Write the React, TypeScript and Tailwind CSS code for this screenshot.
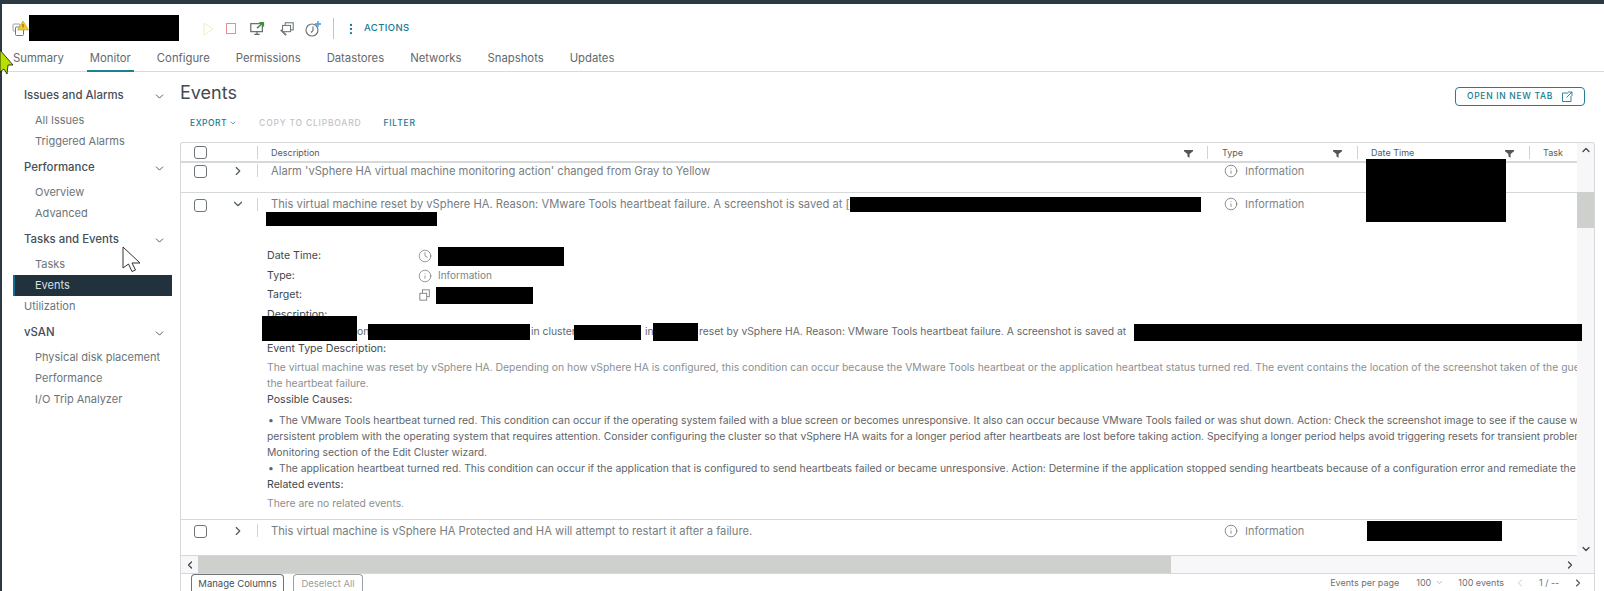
import React from "react";
import { ChevronDown, ChevronRight, ChevronLeft, ChevronUp, MoreVertical, Info, Clock } from "lucide-react";

const Bar = ({ className }: { className: string }) => <span className={`block shrink-0 bg-black ${className}`} />;

const tabs = ["Summary", "Monitor", "Configure", "Permissions", "Datastores", "Networks", "Snapshots", "Updates"];

function Funnel({ className }: { className: string }) {
  return (
    <svg viewBox="0 0 10 10" className={className}>
      <path d="M0 1h10v1.4L6.2 5.6V9.6L3.8 8.4V5.6L0 2.4z" fill="#565656" />
    </svg>
  );
}

function Check() {
  return <span className="block w-[13px] h-[13px] rounded-[3px] border border-[#6f7479] bg-white" />;
}

function NavHead({ label }: { label: string }) {
  return (
    <div className="flex items-center justify-between h-[30px] pt-[2px] pl-[22px] pr-[6px]">
      <span className="text-[11.4px] font-medium text-[#454f57]">{label}</span>
      <ChevronDown size={13} className="text-[#4d5a63]" strokeWidth={1.8} />
    </div>
  );
}

function NavItem({ label, active = false }: { label: string; active?: boolean }) {
  return (
    <div className={`flex items-center h-[21px] ml-[11px] text-[11px] ${active ? "bg-[#22323c] text-[#d6e0e6] border-l-[2px] border-[#0f6d90] pl-[20px]" : "pl-[22px] text-[#6b7479]"}`}>
      {label}
    </div>
  );
}

function InfoCell() {
  return (
    <div className="flex items-center gap-[7px] pl-[17px] text-[11px] text-[#7f8589]">
      <Info size={14} strokeWidth={1.1} className="text-[#555]" />
      <span>Information</span>
    </div>
  );
}

function Sep() {
  return <span className="block w-px h-[13px] bg-[#cfd4d6]" />;
}

function Row({ h, pt, children }: { h: string; pt: string; children: React.ReactNode }) {
  return (
    <div className={`flex items-start ${h} ${pt} border-b border-[#d5d9da]`}>
      <div className="w-[40px] pl-[13px] pt-[2px] shrink-0"><Check /></div>
      <div className="w-[36px] pt-[1px] shrink-0 pl-[10px] text-[#4f5a61]"><ChevronRight size={14} strokeWidth={2} /></div>
      <div className="pt-[1px] shrink-0"><Sep /></div>
      <div className="pl-[13px] w-[949px] shrink-0 text-[11.2px] leading-[16px] text-[#777d81] whitespace-nowrap">{children}</div>
      <InfoCell />
    </div>
  );
}

const Label = ({ children }: { children: React.ReactNode }) => <div className="text-[10.6px] text-[#3f474c] h-[18px] leading-[18px]">{children}</div>;
const Body = ({ children, light = false }: { children: React.ReactNode; light?: boolean }) => <div className={`text-[10.35px] leading-[16px] whitespace-nowrap ${light ? "text-[#8b9093]" : "text-[#5f6569]"}`}>{children}</div>;
const Bullet = () => <span className="inline-block w-[12px] pl-[1px]">•</span>;
const DetailLabel = ({ children }: { children: React.ReactNode }) => <span className="w-[151px] text-[10.6px] text-[#3f474c]">{children}</span>;

export default function App() {
  return (
    <div className="w-[1604px] h-[591px] relative overflow-hidden bg-white text-[#565c60]" style={{ fontFamily: 'Inter, "Liberation Sans", sans-serif' }}>
      <div className="h-[4px] bg-[#2b3a42]" />
      <div className="flex h-[587px] border-l-[2px] border-[#2b3a42]">
        <div className="flex-1 min-w-0 flex flex-col">
          {/* Header */}
          <div className="h-[45px] flex items-center pl-[10px] pt-[4px] shrink-0">
            <svg viewBox="0 0 17 17" className="w-[17px] h-[17px]">
              <rect x="1" y="4" width="7" height="7" rx="1" fill="none" stroke="#9aa0a3" strokeWidth="1" />
              <rect x="3.5" y="7" width="8" height="8.5" rx="1" fill="#fff" stroke="#777" strokeWidth="1" />
              <path d="M11 1 16.5 10H5.5z" fill="#f5cb2a" stroke="#a58d12" strokeWidth=".5" />
              <path d="M11 4v3.5" stroke="#6c5c08" strokeWidth="1" />
            </svg>
            <Bar className="w-[150px] h-[26px] mr-[21px] -mt-[1px]" />
            <div className="flex items-center gap-[7px]">
              <svg viewBox="0 0 16 16" className="w-[16px] h-[16px]"><path d="M4 2v12l9-6z" fill="none" stroke="#f2ecc4" strokeWidth="1" /></svg>
              <span className="w-[10px] h-[11px] mx-[3px] border border-[#ea8d8d]" />
              <svg viewBox="0 0 18 18" className="w-[16px] h-[16px] ml-[3px]"><rect x="2" y="3" width="13" height="9" fill="none" stroke="#59666d" strokeWidth="1.3" /><path d="M6 15h6M9 12v3" stroke="#59666d" strokeWidth="1.3" /><path d="M9 8l7-6" stroke="#3d9140" strokeWidth="1.6" /><path d="M11 1h6v6z" fill="#3d9140" /></svg>
              <svg viewBox="0 0 18 18" className="w-[16px] h-[16px] ml-[7px]"><rect x="7" y="2" width="9" height="8" fill="none" stroke="#70797e" strokeWidth="1.2" /><rect x="4" y="5" width="9" height="7" fill="#fff" stroke="#70797e" strokeWidth="1.2" /><path d="M2 10l6 6" stroke="#70797e" strokeWidth="2" /></svg>
              <svg viewBox="0 0 18 18" className="w-[18px] h-[18px] ml-[2px]"><circle cx="8" cy="10" r="6" fill="none" stroke="#70797e" strokeWidth="1.2" /><path d="M9 6.5v4l-2 2" fill="none" stroke="#70797e" strokeWidth="1.2" /><path d="M14 1v6M11 4h6" stroke="#3f9bd6" strokeWidth="1.3" /></svg>
            </div>
            <span className="w-px h-[21px] bg-[#bfc4c6] ml-[11px] mr-[10px]" />
            <MoreVertical size={14} className="text-[#1a7f93]" strokeWidth={2} />
            <span className="ml-[6px] text-[9.5px] font-medium tracking-[0.4px] text-[#177a8f]">ACTIONS</span>
          </div>
          {/* Tabs */}
          <div className="h-[23px] flex items-start border-b border-[#d8dbdc] pl-[11px] gap-[26px] text-[11.3px] text-[#62696e] shrink-0">
            {tabs.map((t) => (
              <div key={t} className={`h-[23px] leading-[19px] ${t === "Monitor" ? "border-b-[2px] border-[#1d7f93] px-[3px] -mx-[3px]" : ""}`}>{t}</div>
            ))}
          </div>
          {/* Main */}
          <div className="flex flex-1 min-h-0">
            <div className="w-[170px] pt-[8px] shrink-0">
              <NavHead label="Issues and Alarms" />
              <NavItem label="All Issues" />
              <NavItem label="Triggered Alarms" />
              <NavHead label="Performance" />
              <NavItem label="Overview" />
              <NavItem label="Advanced" />
              <NavHead label="Tasks and Events" />
              <NavItem label="Tasks" />
              <NavItem label="Events" active />
              <div className="flex items-center h-[21px] pl-[22px] text-[11px] text-[#6b7479]">Utilization</div>
              <NavHead label="vSAN" />
              <NavItem label="Physical disk placement" />
              <NavItem label="Performance" />
              <NavItem label="I/O Trip Analyzer" />
            </div>
            <div className="flex-1 min-w-0 pl-[8px] flex flex-col">
              <div className="flex items-start justify-between h-[39px] pr-[19px] shrink-0">
                <h1 className="text-[18px] leading-[24px] pt-[9px] text-[#3f4a52]">Events</h1>
                <div className="mt-[15px] h-[19px] w-[130px] border border-[#1d7f93] rounded-[4px] flex items-center justify-center gap-[8px] text-[8.5px] font-medium tracking-[0.7px] text-[#177a8f]">
                  OPEN IN NEW TAB
                  <svg viewBox="0 0 12 12" className="w-[12px] h-[12px]" fill="none" stroke="#177a8f" strokeWidth=".9"><path d="M7 2H1.5v8.5H10V5M7 1h4v4M11 1 5.5 6.5" /></svg>
                </div>
              </div>
              <div className="flex items-center h-[24px] pl-[10px] gap-[22px] text-[8.5px] font-medium tracking-[0.8px] shrink-0">
                <span className="flex items-center gap-[2px] text-[#177a8f] tracking-[0.5px]">EXPORT <ChevronDown size={8} strokeWidth={2} /></span>
                <span className="text-[#bfc4c6]">COPY TO CLIPBOARD</span>
                <span className="text-[#177a8f]">FILTER</span>
              </div>
              <div className="h-[7px] shrink-0" />
              {/* Grid */}
              <div className="border border-[#d5d9da] border-b-0 rounded-t-[3px] flex-1 min-h-0 flex flex-col relative overflow-hidden mr-[9px]">
                <div className="flex h-[20px] items-center border-b-2 border-[#d5d9da] shrink-0 text-[9px] text-[#565c60]">
                  <div className="w-[40px] pl-[13px] shrink-0"><Check /></div>
                  <div className="w-[36px] shrink-0" />
                  <Sep />
                  <div className="pl-[13px] pt-[1px] w-[949px] shrink-0 relative h-full flex items-center">Description<Funnel className="absolute right-[14px] top-[6px] w-[9px] h-[9px]" /></div>
                  <Sep />
                  <div className="pl-[14px] pt-[1px] w-[149px] shrink-0 relative h-full flex items-center">Type<Funnel className="absolute right-[15px] top-[6px] w-[9px] h-[9px]" /></div>
                  <Sep />
                  <div className="pl-[13px] pt-[1px] w-[171px] shrink-0 relative h-full flex items-center">Date Time<Funnel className="absolute right-[15px] top-[6px] w-[9px] h-[9px]" /></div>
                  <Sep />
                  <div className="pl-[13px] pt-[1px]">Task</div>
                </div>
                <div className="flex-1 min-h-0 relative pr-[17px]">
                  <Row h="h-[30px]" pt="pt-[0px]">Alarm 'vSphere HA virtual machine monitoring action' changed from Gray to Yellow</Row>
                  {/* Expanded */}
                  <div className="border-b border-[#d5d9da] h-[327px] overflow-hidden">
                    <div className="flex items-start h-[49px]">
                      <div className="w-[40px] pl-[13px] pt-[6px] shrink-0"><Check /></div>
                      <div className="w-[36px] pt-[4px] shrink-0 pl-[10px] text-[#4f5a61]"><ChevronDown size={14} strokeWidth={2} /></div>
                      <div className="pt-[5px] shrink-0"><Sep /></div>
                      <div className="pl-[13px] pt-[3px] w-[949px] shrink-0 text-[11.2px] text-[#777d81] whitespace-nowrap">
                        <div className="flex items-center h-[16px]">This virtual machine reset by vSphere HA. Reason: VMware Tools heartbeat failure. A screenshot is saved at [<Bar className="w-[351px] h-[15px]" /></div>
                        <Bar className="w-[171px] h-[14px] -ml-[5px]" />
                      </div>
                      <div className="pt-[3px]"><InfoCell /></div>
                    </div>
                    <div className="pl-[86px] pt-[4px]">
                      <div className="flex items-center h-[20px]"><DetailLabel>Date Time:</DetailLabel><Clock size={14} strokeWidth={1.1} className="text-[#666] mr-[6px]" /><Bar className="w-[126px] h-[19px]" /></div>
                      <div className="flex items-center h-[19px]"><DetailLabel>Type:</DetailLabel><Info size={14} strokeWidth={1.1} className="text-[#666] mr-[6px]" /><span className="text-[10px] text-[#7d8387]">Information</span></div>
                      <div className="flex items-center h-[20px]"><DetailLabel>Target:</DetailLabel><svg viewBox="0 0 14 14" className="w-[12px] h-[12px] ml-[1px] mr-[5px]"><rect x="4" y="1" width="8" height="8" fill="none" stroke="#777" /><rect x="1" y="5" width="8" height="8" fill="#fff" stroke="#777" /></svg><Bar className="w-[97px] h-[17px]" /></div>
                      <div className="h-[1px]" />
                      <Label>Description:</Label>
                      <div className="flex items-center h-[16px] text-[10.35px] text-[#63696d] whitespace-nowrap -ml-[5px]">
                        <Bar className="w-[95px] h-[25px] -mt-[8px]" />
                        <span className="w-[11px] shrink-0">on</span>
                        <Bar className="w-[162px] h-[16px]" />
                        <span className="w-[44px] pl-[1px] shrink-0">in cluster</span>
                        <Bar className="w-[67px] h-[15px]" />
                        <span className="w-[12px] pl-[4px] shrink-0">in</span>
                        <Bar className="w-[45px] h-[18px]" />
                        <span className="w-[436px] pl-[1px] shrink-0">reset by vSphere HA. Reason: VMware Tools heartbeat failure. A screenshot is saved at</span>
                        <Bar className="w-[449px] h-[17px]" />
                      </div>
                      <Label>Event Type Description:</Label>
                      <div className="h-[1px]" />
                      <Body light>The virtual machine was reset by vSphere HA. Depending on how vSphere HA is configured, this condition can occur because the VMware Tools heartbeat or the application heartbeat status turned red. The event contains the location of the screenshot taken of the guest console at the time of the</Body>
                      <Body light>the heartbeat failure.</Body>
                      <Label>Possible Causes:</Label>
                      <div className="h-[3px]" />
                      <Body><Bullet />The VMware Tools heartbeat turned red. This condition can occur if the operating system failed with a blue screen or becomes unresponsive. It also can occur because VMware Tools failed or was shut down. Action: Check the screenshot image to see if the cause was a</Body>
                      <Body>persistent problem with the operating system that requires attention. Consider configuring the cluster so that vSphere HA waits for a longer period after heartbeats are lost before taking action. Specifying a longer period helps avoid triggering resets for transient problems. See the VM</Body>
                      <Body>Monitoring section of the Edit Cluster wizard.</Body>
                      <Body><Bullet />The application heartbeat turned red. This condition can occur if the application that is configured to send heartbeats failed or became unresponsive. Action: Determine if the application stopped sending heartbeats because of a configuration error and remediate the problem.</Body>
                      <Label>Related events:</Label>
                      <div className="h-[1px]" />
                      <Body light>There are no related events.</Body>
                    </div>
                  </div>
                  <Row h="h-[36px]" pt="pt-[3px]">This virtual machine is vSphere HA Protected and HA will attempt to restart it after a failure.</Row>
                  {/* Redactions lying over the date column */}
                  <Bar className="absolute left-[1185px] -top-[4px] w-[140px] h-[63px]" />
                  <Bar className="absolute left-[1186px] top-[358px] w-[135px] h-[20px]" />
                  {/* vertical scrollbar */}
                  <div className="absolute right-0 -top-[20px] bottom-0 w-[17px] bg-[#f7f6f8] flex flex-col items-center justify-between py-[1px] text-[#444]">
                    <ChevronUp size={12} strokeWidth={2.5} />
                    <span className="absolute top-[49px] left-0 w-[17px] h-[36px] bg-[#cdd0cd]" />
                    <ChevronDown size={12} strokeWidth={2.5} />
                  </div>
                  <Bar className="absolute left-[1395px] top-[161px] w-[6px] h-[17px]" />
                </div>
                {/* horizontal scrollbar */}
                <div className="h-[18px] bg-[#f7f6f8] flex items-center shrink-0 border-b border-[#d5d9da]">
                  <span className="w-[17px] flex justify-center text-[#444]"><ChevronLeft size={12} strokeWidth={2.5} /></span>
                  <span className="w-[973px] h-full bg-[#cdd0cd]" />
                  <ChevronRight size={12} strokeWidth={2.5} className="ml-auto mr-[18px] text-[#444]" />
                </div>
                {/* Footer */}
                <div className="h-[17px] flex items-start shrink-0 pl-[10px] pr-[10px]">
                  <span className="h-[17px] w-[93px] text-center border border-b-0 border-[#6f7479] rounded-t-[4px] text-[9.5px] leading-[17px] text-[#454f57]">Manage Columns</span>
                  <span className="h-[17px] w-[70px] text-center ml-[9px] border border-b-0 border-[#9aa0a3] rounded-t-[4px] text-[9.5px] leading-[17px] text-[#9aa0a3]">Deselect All</span>
                  <div className="ml-auto flex items-center h-[17px] text-[9px] text-[#6b7174]">
                    <span>Events per page</span>
                    <span className="ml-[17px]">100</span>
                    <ChevronDown size={9} className="ml-[4px] text-[#aaa]" />
                    <span className="ml-[14px]">100 events</span>
                    <ChevronLeft size={12} className="ml-[10px] text-[#c5c9cb]" />
                    <span className="ml-[13px] w-[26px]">1 / --</span>
                    <ChevronRight size={12} strokeWidth={2.2} className="ml-[7px] text-[#555]" />
                  </div>
                </div>
              </div>
            </div>
          </div>
        </div>
      </div>
      {/* Overlay cursors */}
      <svg viewBox="0 0 14 24" className="absolute left-0 top-[50px] w-[14px] h-[24px]">
        <path d="M0 0 13 15H8l-1 9-3-5-4 3z" fill="#b6e000" stroke="#111" strokeWidth=".8" />
      </svg>
      <svg viewBox="0 0 20 27" className="absolute left-[122px] top-[246px] w-[20px] h-[27px]">
        <path d="M1 1V22L6.5 18 10 25.5 13.5 24 10 17H18Z" fill="#fff" stroke="#333" strokeWidth="1" />
      </svg>
    </div>
  );
}
